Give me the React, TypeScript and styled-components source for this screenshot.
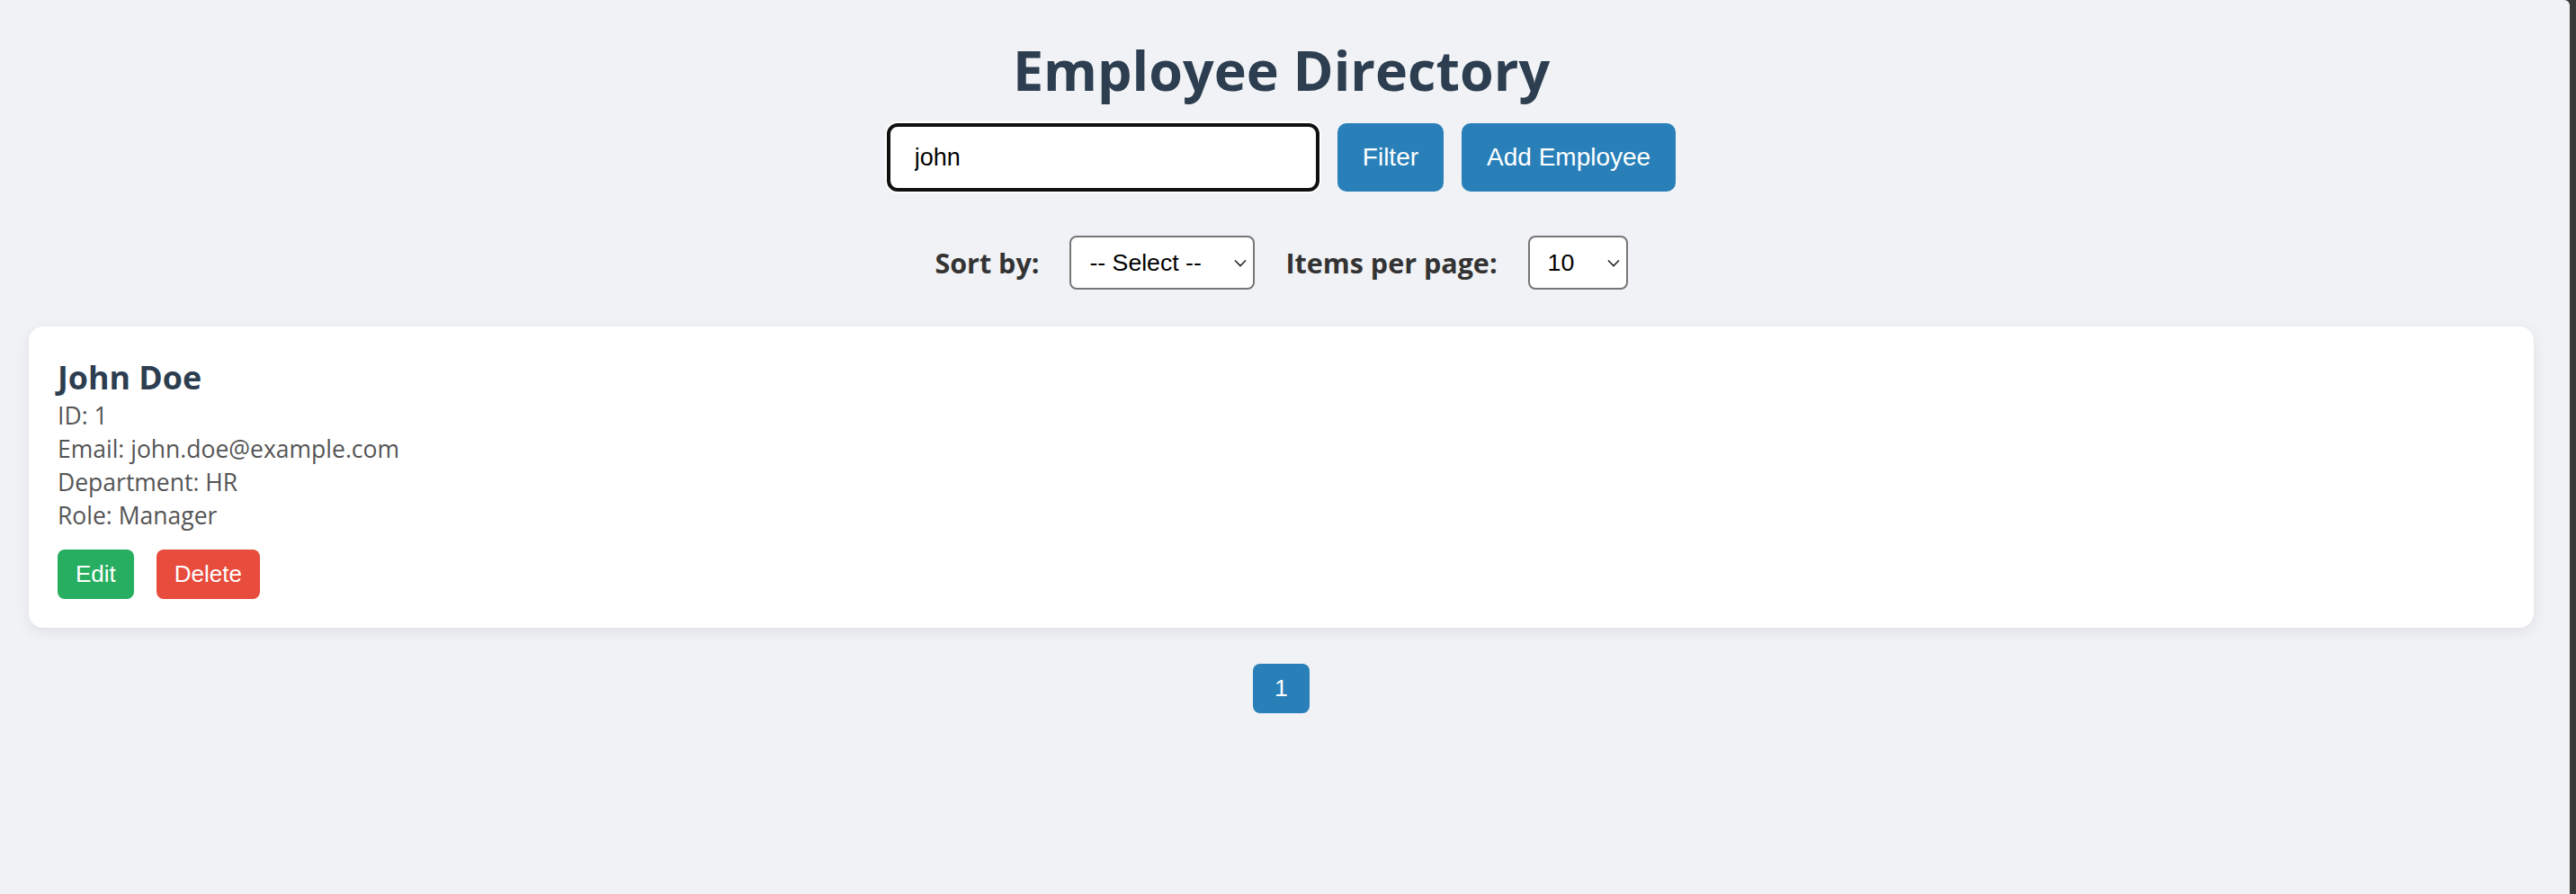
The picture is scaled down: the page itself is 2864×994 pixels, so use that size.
import React from "react";
import styled, { createGlobalStyle } from "styled-components";

const TEXT_FONT = '"Open Sans", "Noto Sans", sans-serif';
const UI_FONT = '"Liberation Sans", Arial, sans-serif';

const GlobalStyle = createGlobalStyle`
  html, body {
    margin: 0;
    padding: 0;
  }
  body {
    background: #3a3a3a;
    font-family: ${TEXT_FONT};
  }
  * { box-sizing: border-box; }
`;

const Frame = styled.div`
  margin-right: 7px;
  min-height: 100vh;
  background: #f0f2f5;
  border-top-right-radius: 6px;
  padding: 35px 40px 40px 32px;
`;

const Title = styled.h1`
  margin: 0;
  text-align: center;
  font-family: ${TEXT_FONT};
  font-size: 61px;
  line-height: 85px;
  font-weight: 700;
  color: #2c3e50;
`;

const SearchRow = styled.div`
  margin-top: 17px;
  display: flex;
  justify-content: center;
  align-items: center;
  gap: 20px;
`;

const SearchInput = styled.input`
  width: 481px;
  height: 76px;
  border: 4px solid #101010;
  border-radius: 12px;
  box-shadow: 0 0 0 2px #ffffff;
  background: #fff;
  padding: 0 24px 0 27px;
  font-family: ${UI_FONT};
  font-size: 27px;
  color: #000;
  outline: none;
`;

const PrimaryButton = styled.button`
  height: 76px;
  padding: 0 28px;
  border: none;
  border-radius: 10px;
  background: #2980b9;
  color: #fff;
  font-family: ${UI_FONT};
  font-size: 28px;
  cursor: pointer;
`;

const SortRow = styled.div`
  margin-top: 49px;
  display: flex;
  justify-content: center;
  align-items: center;
  gap: 34px;
`;

const Label = styled.label`
  font-family: ${TEXT_FONT};
  font-size: 30.5px;
  font-weight: 700;
  color: #333;
  line-height: 60px;
`;

const SelectWrap = styled.div<{ $w: number }>`
  position: relative;
  width: ${(p) => p.$w}px;
  height: 60px;
`;

const Select = styled.select`
  appearance: none;
  -webkit-appearance: none;
  width: 100%;
  height: 100%;
  border: 2px solid #767676;
  border-radius: 8px;
  background: #fff;
  padding: 0 30px 0 20px;
  font-family: ${UI_FONT};
  font-size: 26.67px;
  color: #000;
  outline: none;
`;

const Chevron = styled.svg`
  position: absolute;
  right: 9px;
  top: 50%;
  margin-top: -4px;
  width: 14px;
  height: 9px;
  pointer-events: none;
`;

const Card = styled.div`
  margin-top: 41px;
  background: #fff;
  border-radius: 16px;
  box-shadow: 0 4px 16px rgba(0, 0, 0, 0.08);
  padding: 32px;
`;

const Name = styled.h3`
  margin: 0;
  font-family: ${TEXT_FONT};
  font-size: 35.8px;
  line-height: 49px;
  font-weight: 700;
  color: #2c3e50;
`;

const InfoLine = styled.p`
  margin: 0;
  font-family: ${TEXT_FONT};
  font-size: 26.5px;
  line-height: 37px;
  color: #555;
`;

const Actions = styled.div`
  margin-top: 19px;
  display: flex;
  gap: 25px;
`;

const ActionButton = styled.button<{ $tone: "edit" | "delete" }>`
  height: 55px;
  padding: 0 20px;
  border: none;
  border-radius: 8px;
  background: ${(p) => (p.$tone === "edit" ? "#27ae60" : "#e74c3c")};
  color: #fff;
  font-family: ${UI_FONT};
  font-size: 26px;
  cursor: pointer;
`;

const Pagination = styled.div`
  margin-top: 40px;
  display: flex;
  justify-content: center;
  gap: 10px;
`;

const PageButton = styled.button<{ $active?: boolean }>`
  height: 55px;
  min-width: 63px;
  padding: 0 24px;
  border: none;
  border-radius: 8px;
  background: ${(p) => (p.$active ? "#2980b9" : "#ddd")};
  color: ${(p) => (p.$active ? "#fff" : "#333")};
  font-family: ${UI_FONT};
  font-size: 26.67px;
  cursor: pointer;
`;

const ChevronIcon = () => (
  <Chevron viewBox="0 0 14 9">
    <path d="M1 1.5 L7 7.5 L13 1.5" fill="none" stroke="#222" strokeWidth="1.6" />
  </Chevron>
);

const employees = [
  { id: 1, name: "John Doe", email: "john.doe@example.com", department: "HR", role: "Manager" },
];

export default function App() {
  return (
    <>
      <GlobalStyle />
      <Frame>
        <Title>Employee Directory</Title>
        <SearchRow>
          <SearchInput defaultValue="john" />
          <PrimaryButton>Filter</PrimaryButton>
          <PrimaryButton>Add Employee</PrimaryButton>
        </SearchRow>
        <SortRow>
          <Label>Sort by:</Label>
          <SelectWrap $w={206}>
            <Select defaultValue="">
              <option value="">-- Select --</option>
              <option value="firstName">First Name</option>
              <option value="department">Department</option>
            </Select>
            <ChevronIcon />
          </SelectWrap>
          <Label>Items per page:</Label>
          <SelectWrap $w={111}>
            <Select defaultValue="10">
              <option value="10">10</option>
              <option value="25">25</option>
              <option value="50">50</option>
            </Select>
            <ChevronIcon />
          </SelectWrap>
        </SortRow>
        {employees.map((e) => (
          <Card key={e.id}>
            <Name>{e.name}</Name>
            <InfoLine>ID: {e.id}</InfoLine>
            <InfoLine>Email: {e.email}</InfoLine>
            <InfoLine>Department: {e.department}</InfoLine>
            <InfoLine>Role: {e.role}</InfoLine>
            <Actions>
              <ActionButton $tone="edit">Edit</ActionButton>
              <ActionButton $tone="delete">Delete</ActionButton>
            </Actions>
          </Card>
        ))}
        <Pagination>
          <PageButton $active>1</PageButton>
        </Pagination>
      </Frame>
    </>
  );
}
